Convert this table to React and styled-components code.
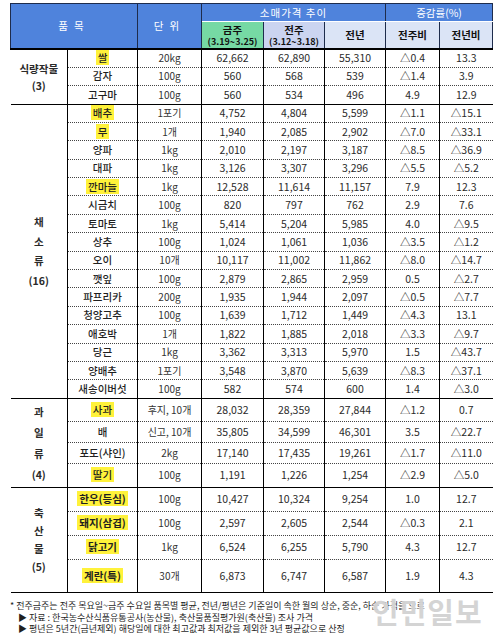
import React from "react";
import styled, { createGlobalStyle } from "styled-components";

const GlobalStyle = createGlobalStyle`
  html, body {
    margin: 0;
    padding: 0;
    background: #ffffff;
  }
  body {
    font-family: "Noto Sans CJK KR", "Noto Sans", sans-serif;
    color: #222;
  }
`;

const groups = [
  {
    label: ["식량작물", "(3)"],
    labelLine: 17,
    heights: [18, 18.5, 18.5],
    rows: [
      ["쌀", "20kg", "62,662", "62,890", "55,310", "△0.4", "13.3", true],
      ["감자", "100g", "560", "568", "539", "△1.4", "3.9"],
      ["고구마", "100g", "560", "534", "496", "4.9", "12.9"],
    ],
  },
  {
    label: ["채", "소", "류", "(16)"],
    labelLine: 19.5,
    heights: Array(16).fill(18.4),
    rows: [
      ["배추", "1포기", "4,752", "4,804", "5,599", "△1.1", "△15.1", true],
      ["무", "1개", "1,940", "2,085", "2,902", "△7.0", "△33.1", true],
      ["양파", "1kg", "2,010", "2,197", "3,187", "△8.5", "△36.9"],
      ["대파", "1kg", "3,126", "3,307", "3,296", "△5.5", "△5.2"],
      ["깐마늘", "1kg", "12,528", "11,614", "11,157", "7.9", "12.3", true],
      ["시금치", "100g", "820", "797", "762", "2.9", "7.6"],
      ["토마토", "1kg", "5,414", "5,204", "5,985", "4.0", "△9.5"],
      ["상추", "100g", "1,024", "1,061", "1,036", "△3.5", "△1.2"],
      ["오이", "10개", "10,117", "11,002", "11,862", "△8.0", "△14.7"],
      ["깻잎", "100g", "2,879", "2,865", "2,959", "0.5", "△2.7"],
      ["파프리카", "200g", "1,935", "1,944", "2,097", "△0.5", "△7.7"],
      ["청양고추", "100g", "1,639", "1,712", "1,449", "△4.3", "13.1"],
      ["애호박", "1개", "1,822", "1,885", "2,018", "△3.3", "△9.7"],
      ["당근", "1kg", "3,362", "3,313", "5,970", "1.5", "△43.7"],
      ["양배추", "1포기", "3,548", "3,870", "5,639", "△8.3", "△37.1"],
      ["새송이버섯", "100g", "582", "574", "600", "1.4", "△3.0"],
    ],
  },
  {
    label: ["과", "일", "류", "(4)"],
    labelLine: 21,
    heights: [23, 21, 21, 24],
    rows: [
      ["사과", "후지, 10개", "28,032", "28,359", "27,844", "△1.2", "0.7", true],
      ["배", "신고, 10개", "35,805", "34,599", "46,301", "3.5", "△22.7"],
      ["포도(샤인)", "2kg", "17,140", "17,435", "19,261", "△1.7", "△11.0"],
      ["딸기", "100g", "1,191", "1,226", "1,254", "△2.9", "△5.0", true],
    ],
  },
  {
    label: ["축", "산", "물", "(5)"],
    labelLine: 18,
    heights: [24, 24, 24, 33],
    bold: true,
    rows: [
      ["한우(등심)", "100g", "10,427", "10,324", "9,254", "1.0", "12.7", true],
      ["돼지(삼겹)", "100g", "2,597", "2,605", "2,544", "△0.3", "2.1", true],
      ["닭고기", "1kg", "6,524", "6,255", "5,790", "4.3", "12.7", true],
      ["계란(특)", "30개", "6,873", "6,747", "6,587", "1.9", "4.3", true],
    ],
  },
];

const Page = styled.div`
  position: relative;
  width: 496px;
  height: 641px;
  padding: 3px 0 0 10px;
  box-sizing: border-box;
  overflow: hidden;
`;

const Table = styled.table`
  width: 482px;
  border-collapse: collapse;
  table-layout: fixed;
  font-size: 10.5px;
  border-bottom: 1px solid #000;
`;

const HeadCell = styled.th`
  background: ${(p) => p.$bg || "#4f83dc"};
  color: ${(p) => (p.$dark ? "#111" : "#fff")};
  font-weight: ${(p) => (p.$dark ? 700 : 400)};
  font-size: 10.5px;
  letter-spacing: ${(p) => p.$spread || "0"};
  border: 1px solid #1e2c4c;
  border-top: ${(p) => (p.$sub ? "1px solid #ffffff" : "1px solid #1e2c4c")};
  border-bottom: ${(p) => (p.$top ? "1px solid #ffffff" : "2px solid #000")};
  height: ${(p) => p.$h}px;
  padding: 0;
  text-align: center;
  vertical-align: middle;
  line-height: 12px;
`;

const Period = styled.span`
  display: block;
  font-size: 9px;
  line-height: 11px;
  font-weight: 700;
`;

const Row = styled.tr`
  height: ${(p) => p.$h}px;
`;

const Cell = styled.td`
  padding: 0;
  text-align: center;
  vertical-align: middle;
  border-left: 1px solid #000;
  border-top: ${(p) => (p.$first ? "1px solid #000" : "1px dotted #444")};
  color: #2a2a2a;
  line-height: 12px;
  white-space: nowrap;
`;

const CategoryCell = styled.td`
  padding: 0;
  text-align: center;
  vertical-align: middle;
  border-top: 1px solid #000;
  font-weight: 700;
  color: #2a2a2a;
  font-size: 10.5px;
`;

const CatLine = styled.div`
  line-height: ${(p) => p.$lh}px;
`;

const ItemName = styled.span`
  padding: 0 2px;
  background: ${(p) => (p.$hl ? "#fff23a" : "transparent")};
  font-weight: ${(p) => (p.$bold ? 700 : 500)};
  color: #1f1f1f;
`;

const Unit = styled.span`
  font-size: 10px;
  color: #333;
`;

const Notes = styled.div`
  margin-top: 7px;
  font-size: 9px;
  color: #1f1f1f;
  white-space: nowrap;
`;

const NoteLine = styled.div`
  height: ${(p) => p.$h}px;
  line-height: ${(p) => p.$h}px;
  padding-left: ${(p) => p.$indent || 0}px;
`;

const Watermark = styled.div`
  position: absolute;
  left: 372px;
  top: 590px;
  font-size: 29px;
  font-weight: 700;
  letter-spacing: 1px;
  color: rgba(205, 205, 205, 0.85);
  text-shadow: 0 0 2px rgba(255, 255, 255, 0.9);
  pointer-events: none;
`;

const App = () => {
  return (
    <Page>
      <GlobalStyle />
      <Table>
        <colgroup>
          <col style={{ width: 57 }} />
          <col style={{ width: 70 }} />
          <col style={{ width: 64 }} />
          <col style={{ width: 62 }} />
          <col style={{ width: 61 }} />
          <col style={{ width: 61 }} />
          <col style={{ width: 54 }} />
          <col style={{ width: 53 }} />
        </colgroup>
        <thead>
          <tr>
            <HeadCell colSpan={2} rowSpan={2} $h={17} $spread="6px">
              품목
            </HeadCell>
            <HeadCell rowSpan={2} $h={17} $spread="6px">
              단위
            </HeadCell>
            <HeadCell colSpan={3} $top $h={17} $spread="1px">
              소매가격 추이
            </HeadCell>
            <HeadCell colSpan={2} $top $h={17}>
              증감률(%)
            </HeadCell>
          </tr>
          <tr>
            <HeadCell $sub $dark $bg="#76d9a4" $h={26}>
              금주
              <Period>(3.19~3.25)</Period>
            </HeadCell>
            <HeadCell $sub $dark $bg="#cbd4f0" $h={26}>
              전주
              <Period>(3.12~3.18)</Period>
            </HeadCell>
            <HeadCell $sub $dark $bg="#dbe4f6" $h={26}>
              전년
            </HeadCell>
            <HeadCell $sub $dark $bg="#dbe4f6" $h={26}>
              전주비
            </HeadCell>
            <HeadCell $sub $dark $bg="#dbe4f6" $h={26}>
              전년비
            </HeadCell>
          </tr>
        </thead>
        <tbody>
          {groups.map((g) =>
            g.rows.map((r, i) => (
              <Row key={g.label[0] + r[0]} $h={g.heights[i]}>
                {i === 0 && (
                  <CategoryCell rowSpan={g.rows.length}>
                    {g.label.map((l) => (
                      <CatLine key={l} $lh={g.labelLine}>
                        {l}
                      </CatLine>
                    ))}
                  </CategoryCell>
                )}
                <Cell $first={i === 0}>
                  <ItemName $hl={r[7]} $bold={g.bold}>
                    {r[0]}
                  </ItemName>
                </Cell>
                <Cell $first={i === 0}>
                  <Unit>{r[1]}</Unit>
                </Cell>
                {r.slice(2, 7).map((v, k) => (
                  <Cell key={k} $first={i === 0}>
                    {v}
                  </Cell>
                ))}
              </Row>
            ))
          )}
        </tbody>
      </Table>
      <Notes>
        <NoteLine $h={12}>
          * 전주금주는 전주 목요일~금주 수요일 품목별 평균, 전년/평년은 기준일이 속한 월의 상순, 중순, 하순 가격을 으로
        </NoteLine>
        <NoteLine $h={11} $indent={8}>
          ▶ 자료 : 한국농수산식품유통공사(농산물), 축산물품질평가원(축산물) 조사 가격
        </NoteLine>
        <NoteLine $h={11} $indent={8}>
          ▶ 평년은 5년간(금년제외) 해당일에 대한 최고값과 최저값을 제외한 3년 평균값으로 산정
        </NoteLine>
      </Notes>
      <Watermark>인민일보</Watermark>
    </Page>
  );
};

export default App;
